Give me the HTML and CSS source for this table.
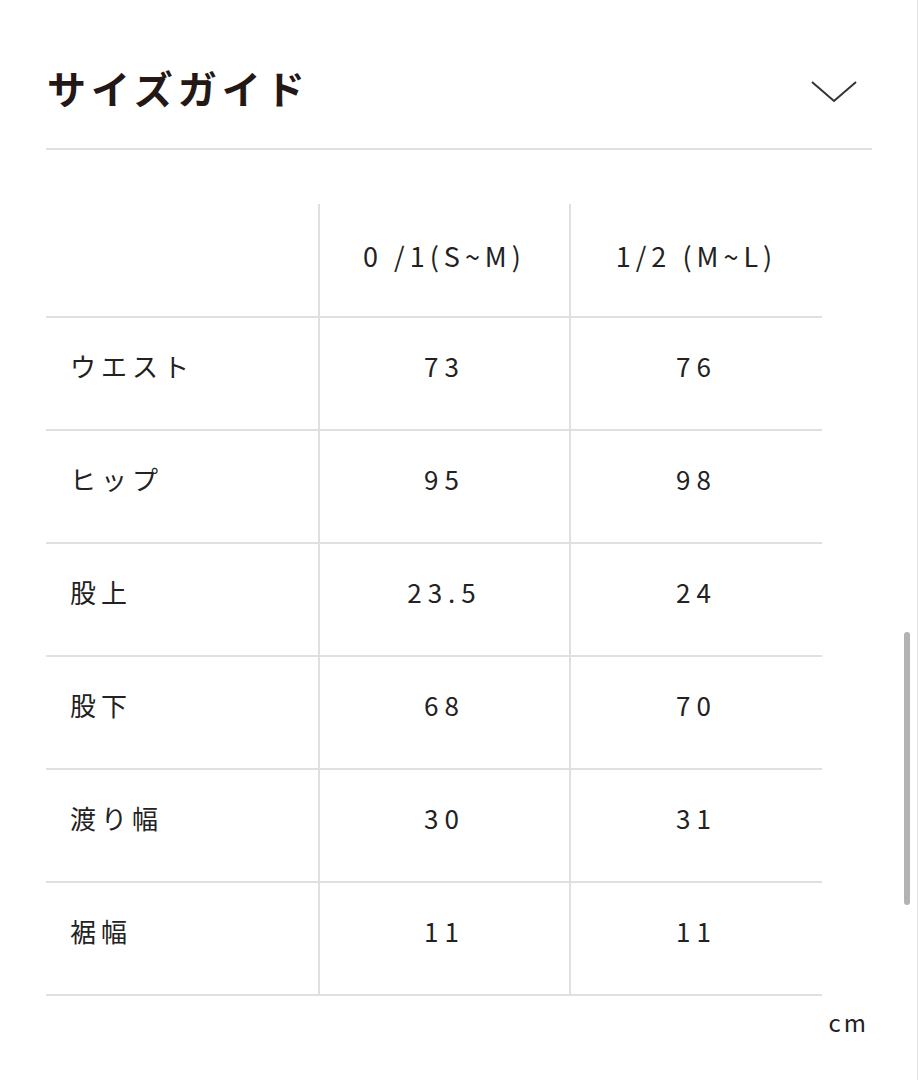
FILE: index.html
```html
<!DOCTYPE html>
<html lang="ja">
<head>
<meta charset="utf-8">
<link rel="stylesheet" href="styles.css">
</head>
<body>
<div class="page">
  <div class="head">
    <h2 class="title">サイズガイド</h2>
    <svg class="chev" width="46" height="24" viewBox="0 0 46 24"><path d="M1 2 L23 21 L45 2" fill="none" stroke="#333" stroke-width="2"/></svg>
  </div>
  <div class="rule"></div>
  <table class="size">
    <colgroup><col class="c1"><col class="c2"><col class="c3"></colgroup>
    <tr class="hrow"><th></th><th>0 /1(S~M)</th><th>1/2 (M~L)</th></tr>
    <tr><td>ウエスト</td><td>73</td><td>76</td></tr>
    <tr><td>ヒップ</td><td>95</td><td>98</td></tr>
    <tr><td>股上</td><td>23.5</td><td>24</td></tr>
    <tr><td>股下</td><td>68</td><td>70</td></tr>
    <tr><td>渡り幅</td><td>30</td><td>31</td></tr>
    <tr><td>裾幅</td><td>11</td><td>11</td></tr>
  </table>
  <div class="unit">cm</div>
</div>
<div class="scrollthumb"></div>
<div class="edge"></div>
</body>
</html>
```
FILE: styles.css
```css
html, body {
  margin: 0;
  padding: 0;
  background: #fff;
}
body {
  font-family: "Noto Sans CJK JP", "Noto Sans", sans-serif;
  color: #222;
  width: 918px;
  height: 1080px;
  overflow: hidden;
  position: relative;
}
.page {
  padding: 0 46px;
}
.head {
  display: flex;
  align-items: center;
  justify-content: space-between;
  height: 148px;
  padding-top: 26px;
  box-sizing: border-box;
  padding-right: 15px;
}
.title {
  margin: 0;
  padding-left: 1px;
  font-size: 39px;
  font-weight: 700;
  letter-spacing: 5px;
  color: #231815;
  line-height: 1;
}
.chev {
  margin-top: 10px;
}
.rule {
  height: 2px;
  background: #e0e0e0;
}
.size {
  margin-top: 54px;
  border-collapse: collapse;
  width: 776px;
  table-layout: fixed;
}
.c1 { width: 273px; }
.c2 { width: 251px; }
.c3 { width: 252px; }
.size th, .size td {
  height: 113px;
  padding: 0;
  border-bottom: 2px solid #e0e0e0;
  text-align: center;
  font-weight: 400;
  color: #222;
  box-sizing: border-box;
}
.size th {
  font-size: 27px;
  letter-spacing: 5px;
  padding-bottom: 10px;
}
.size td {
  font-size: 26px;
  letter-spacing: 6px;
  padding-bottom: 16px;
}
.size th + th, .size td + td {
  border-left: 2px solid #e0e0e0;
}
.size td:first-child {
  text-align: left;
  padding-left: 24px;
  letter-spacing: 5px;
}
.unit {
  text-align: right;
  font-size: 24px;
  letter-spacing: 3px;
  padding-right: 3px;
  margin-top: 8px;
  color: #222;
}
.scrollthumb {
  position: absolute;
  left: 904px;
  top: 632px;
  width: 6px;
  height: 273px;
  border-radius: 3px;
  background: #b3b3b3;
}
.edge {
  position: absolute;
  right: 0;
  top: 0;
  width: 1px;
  height: 1080px;
  background: #e6e6e6;
}
```
